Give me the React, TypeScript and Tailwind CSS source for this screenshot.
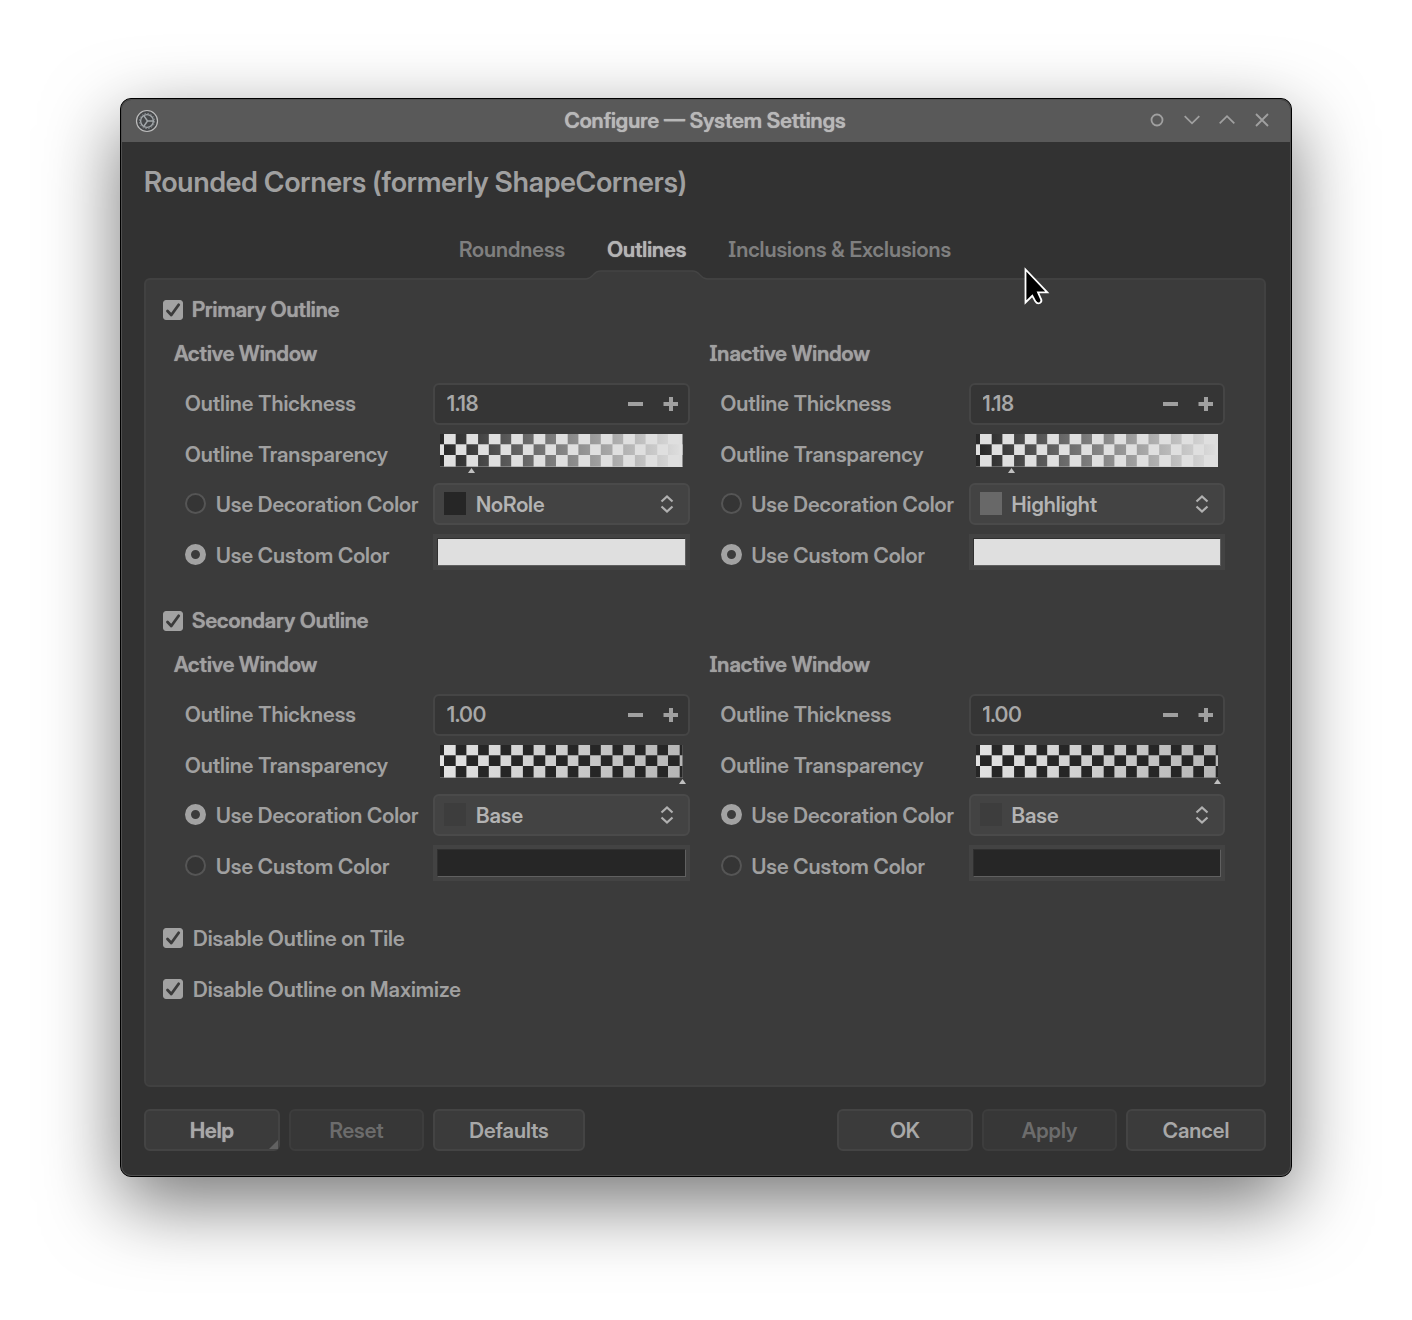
import { useId, useState, type ReactNode } from "react";

const LIGHT = "#dfdfdf";
const DARK = "#262626";

function SettingsIcon() {
  return (
    <svg width="24" height="24" viewBox="0 0 24 24" fill="none" aria-hidden="true">
      <circle cx="12" cy="12" r="10.5" fill="#46484a" stroke="#bdbdbd" strokeWidth="1.2" />
      <circle cx="12" cy="12" r="6.4" stroke="#a3a8ab" strokeWidth="1.4" />
      <circle cx="12" cy="12" r="7.6" stroke="#8b9093" strokeWidth="1" strokeDasharray="1.6 1.4" />
      <path d="M12.5 12H18M12.5 12L9 6.8M12.5 12L9 17" stroke="#a3a8ab" strokeWidth="1.4" />
    </svg>
  );
}

function WindowButton({ label, children }: { label: string; children: ReactNode }) {
  return (
    <button type="button" aria-label={label} className="flex h-8 w-[35px] items-center justify-center text-[#a0a0a0]">
      <svg width="18" height="18" viewBox="0 0 18 18" fill="none" stroke="currentColor" strokeWidth="1.8" aria-hidden="true">
        {children}
      </svg>
    </button>
  );
}

function TitleBar() {
  return (
    <header className="grid h-[42px] grid-cols-[1fr_auto_1fr] items-center rounded-t-[9px] bg-[#595959] pr-[11px] pl-[13px]">
      <SettingsIcon />
      <h1 className="pr-1 text-[21px] text-[#b8b8b8] [text-shadow:0_0_1px_currentColor]">Configure — System Settings</h1>
      <div className="flex justify-end pb-0.5">
        <WindowButton label="Keep above">
          <circle cx="9" cy="9" r="5.5" />
        </WindowButton>
        <WindowButton label="Minimize">
          <path d="M1.7 5.2L9 12.3L16.3 5.2" />
        </WindowButton>
        <WindowButton label="Maximize">
          <path d="M1.7 12.3L9 5.2L16.3 12.3" />
        </WindowButton>
        <WindowButton label="Close">
          <path d="M3 3L15 15M15 3L3 15" />
        </WindowButton>
      </div>
    </header>
  );
}

function Tabs() {
  return (
    <div role="tablist" className="flex h-14 justify-center leading-[54px] text-[#7f7f7f]">
      <button type="button" role="tab" aria-selected="false" className="px-[21px]">
        Roundness
      </button>
      <button type="button" role="tab" aria-selected="true" className="relative px-[21px] text-[#b4b4b4] [text-shadow:0_0_1px_currentColor]">
        Outlines
        <svg className="absolute inset-x-0 -bottom-0.5 h-[10px] w-full" viewBox="0 0 122 10" preserveAspectRatio="none" aria-hidden="true">
          <path d="M0 9C8 8.500 6 1 15 1H107C116 1 114 8.500 122 9V10H0Z" fill="#3b3b3b" />
          <path d="M0 9C8 8.500 6 1 15 1H107C116 1 114 8.500 122 9" fill="none" stroke="#444444" strokeWidth="1.300" />
        </svg>
      </button>
      <button type="button" role="tab" aria-selected="false" className="px-[21px]">
        Inclusions &amp; Exclusions
      </button>
    </div>
  );
}

function Check({ label, bold = false }: { label: string; bold?: boolean }) {
  return (
    <label className={bold ? "flex h-[30px] items-center gap-[9px] [text-shadow:0_0_1px_currentColor]" : "flex h-[30px] items-center gap-[10px]"}>
      <span className="relative block size-5">
        <input type="checkbox" defaultChecked className="peer block size-5 appearance-none rounded-[3px] border border-[#5a5a5a] bg-[#353535] checked:border-[#a2a2a2] checked:bg-[#a2a2a2]" />
        <svg className="pointer-events-none absolute inset-0 hidden size-5 peer-checked:block" viewBox="0 0 20 20" fill="none" aria-hidden="true">
          <path d="M4.500 11L8.300 15L15.700 4.800" stroke="#3b3b3b" strokeWidth="2.800" strokeLinecap="round" strokeLinejoin="round" />
        </svg>
      </span>
      <span className={bold ? "" : "pt-0.5"}>{label}</span>
    </label>
  );
}

function SpinBox({ id, initial }: { id: string; initial: string }) {
  const [value, setValue] = useState(initial);
  const step = (d: number) => setValue((v) => Math.max(0, (parseFloat(v) || 0) + d).toFixed(2));
  return (
    <div className="flex h-[42px] items-center rounded-md border-2 border-[#454545] bg-[#353535] text-[#a8a8a8]">
      <input id={id} type="text" value={value} onChange={(e) => setValue(e.target.value)} className="w-0 min-w-0 flex-1 bg-transparent pl-3 outline-none" />
      <button type="button" aria-label="Decrease" onClick={() => step(-0.25)} className="flex h-full w-[35px] items-center justify-center">
        <svg width="15" height="15" viewBox="0 0 15 15" fill="#a0a0a0" aria-hidden="true">
          <rect x="0" y="5" width="15" height="4" />
        </svg>
      </button>
      <button type="button" aria-label="Increase" onClick={() => step(0.25)} className="flex h-full w-[35px] items-center justify-center">
        <svg width="15" height="15" viewBox="0 0 15 15" fill="#a0a0a0" aria-hidden="true">
          <path d="M0.500 5H6V0H10V5H15V9H10V14H6V9H0.500Z" />
        </svg>
      </button>
    </div>
  );
}

function AlphaSlider({ id, light, initial }: { id: string; light: boolean; initial: number }) {
  const [value, setValue] = useState(initial);
  const key = useId();
  const from = light ? DARK : "#e2e2e2";
  const to = light ? LIGHT : "#b6b6b6";
  return (
    <div className="relative mr-[7px] ml-[7px] h-10">
      <svg className="h-[33px] w-full" aria-hidden="true">
        <defs>
          <linearGradient id={`${key}-g`}>
            <stop offset="0" stopColor={from} />
            <stop offset="1" stopColor={to} />
          </linearGradient>
          <pattern id={`${key}-p`} x="4" y="-1.400" width="22.400" height="22.400" patternUnits="userSpaceOnUse">
            <path d={light ? "M0 0H11.200V11.200H0ZM11.200 11.200H22.400V22.400H11.200Z" : "M11.200 0H22.400V11.200H11.200ZM0 11.200H11.200V22.400H0Z"} fill={light ? LIGHT : DARK} shapeRendering="crispEdges" />
          </pattern>
        </defs>
        <rect width="100%" height="33" fill={`url(#${key}-g)`} />
        <rect width="100%" height="33" fill={`url(#${key}-p)`} />
      </svg>
      <svg className="absolute bottom-px -ml-1 h-[5px] w-[7px]" style={{ left: `${value}%` }} viewBox="0 0 7 5" aria-hidden="true">
        <path d="M3.500 0L7 5H0Z" fill="#c0c0c0" />
      </svg>
      <input id={id} type="range" min="0" max="100" value={value} onChange={(e) => setValue(Number(e.target.value))} className="absolute inset-0 h-full w-full cursor-pointer opacity-0" />
    </div>
  );
}

function RoleSelect({ label, value, swatch }: { label: string; value: string; swatch: string }) {
  return (
    <div className="relative">
      <select aria-label={label} defaultValue={value} className="h-[42px] w-full appearance-none rounded-md border-2 border-[#4a4a4a] bg-[#434343] pt-0.5 pr-10 pl-[41px] text-[#b3b3b3]">
        <option>NoRole</option>
        <option>Highlight</option>
        <option>Base</option>
      </select>
      <span className="pointer-events-none absolute top-[9px] left-[11px] h-[23px] w-[22px]" style={{ backgroundColor: swatch }} />
      <svg className="pointer-events-none absolute top-3 right-4 h-[18px] w-[14px]" viewBox="0 0 14 18" fill="none" stroke="#b0b0b0" strokeWidth="2.200" aria-hidden="true">
        <path d="M1.500 6.500L7 1.500L12.500 6.500M1.500 11.500L7 16.500L12.500 11.500" />
      </svg>
    </div>
  );
}

function Radio({ name, label, checked }: { name: string; label: string; checked: boolean }) {
  return (
    <label className="flex items-center gap-[10px] pb-0.5">
      <input
        type="radio"
        name={name}
        defaultChecked={checked}
        className="size-[21px] appearance-none rounded-full border-2 border-[#555555] bg-[#353535] checked:border-[6px] checked:border-[#a2a2a2] checked:bg-[#3b3b3b]"
      />
      <span className="pt-1">{label}</span>
    </label>
  );
}

type OutlineProps = {
  title: string;
  thickness: string;
  alpha: number;
  role: string;
  swatch: string;
  custom: boolean;
};

function OutlineColumn({ title, thickness, alpha, role, swatch, custom }: OutlineProps) {
  const id = useId();
  return (
    <fieldset className="min-w-0">
      <legend className="h-[45px] leading-8 [text-shadow:0_0_1px_currentColor]">{title}</legend>
      <div className="grid grid-cols-[248px_1fr] items-center gap-y-[9px] pl-[11px]">
        <label htmlFor={`${id}-t`}>Outline Thickness</label>
        <SpinBox id={`${id}-t`} initial={thickness} />
        <label htmlFor={`${id}-a`} className="pt-0.5">
          Outline Transparency
        </label>
        <AlphaSlider id={`${id}-a`} light={custom} initial={alpha} />
        <Radio name={id} label="Use Decoration Color" checked={!custom} />
        <RoleSelect label="Decoration color" value={role} swatch={swatch} />
        <Radio name={id} label="Use Custom Color" checked={custom} />
        <div className="h-[42px]">
          <button type="button" aria-label="Custom color" className="block h-9 w-full bg-[#434343] p-1">
            <span className="block h-7 border border-t-[#303030] border-r-[#606060] border-b-[#606060] border-l-[#303030]" style={{ backgroundColor: custom ? LIGHT : DARK }} />
          </button>
        </div>
      </div>
    </fieldset>
  );
}

function OutlineSection({ title, columns }: { title: string; columns: OutlineProps[] }) {
  return (
    <section>
      <Check label={title} bold />
      <div className="mt-[13px] mr-[22px] ml-[11px] grid grid-cols-2 gap-5">
        {columns.map((c) => (
          <OutlineColumn key={c.title} {...c} />
        ))}
      </div>
    </section>
  );
}

function FooterButton({ children, disabled = false, width, menu = false }: { children: ReactNode; disabled?: boolean; width: string; menu?: boolean }) {
  return (
    <button
      type="button"
      disabled={disabled}
      className={`relative h-[42px] rounded-md border-2 border-[#444444] bg-[#3b3b3b] pt-0.5 text-[#a8a8a8] disabled:border-[#3d3d3d] disabled:bg-[#373737] disabled:text-[#6c6c6c] ${width} ${menu ? "[text-shadow:0_0_1px_currentColor]" : ""}`}
    >
      {children}
      {menu && (
        <svg className="absolute right-0 bottom-0 size-[9px]" viewBox="0 0 9 9" aria-hidden="true">
          <path d="M9 0V9H0Z" fill="#616161" />
        </svg>
      )}
    </button>
  );
}

function Cursor() {
  return (
    <svg className="pointer-events-none absolute top-[168px] left-[902px] h-10 w-7" viewBox="0 0 28 40" aria-hidden="true">
      <path d="M2.500 2.500V35.500L9.300 28.800L12.500 34.600Q14.200 37.200 16.800 36Q19.300 34.600 18 32L15 25.300H24.300Z" fill="#000000" stroke="#ffffff" strokeWidth="1.800" />
    </svg>
  );
}

export default function App() {
  return (
    <div className="min-h-screen bg-white px-[120px] pt-[98px] pb-36 font-['Inter_Display','Inter',sans-serif] text-[21px] leading-[30px] font-semibold text-[#a0a0a0] [font-feature-settings:'cv08'] [font-variation-settings:'opsz'_32]">
      <main className="relative rounded-[11px] border border-black bg-[#323232] shadow-[0_26px_76px_rgba(0,0,0,0.54)]">
        <div className="rounded-[10px] border border-[#505050]">
          <TitleBar />
          <div className="pr-6 pb-6 pl-[22px]">
            <h2 className="pt-5 text-[28px] leading-10">Rounded Corners (formerly ShapeCorners)</h2>
            <div className="pt-5">
              <Tabs />
            </div>
            <div role="tabpanel" className="rounded-md border-2 border-[#414141] bg-[#3b3b3b] px-[17px] pt-[15px] pb-[81px]">
              <div className="flex flex-col gap-[30px]">
                <OutlineSection
                  title="Primary Outline"
                  columns={[
                    { title: "Active Window", thickness: "1.18", alpha: 13, role: "NoRole", swatch: "#262626", custom: true },
                    { title: "Inactive Window", thickness: "1.18", alpha: 15, role: "Highlight", swatch: "#686868", custom: true },
                  ]}
                />
                <OutlineSection
                  title="Secondary Outline"
                  columns={[
                    { title: "Active Window", thickness: "1.00", alpha: 100, role: "Base", swatch: "#3d3d3d", custom: false },
                    { title: "Inactive Window", thickness: "1.00", alpha: 100, role: "Base", swatch: "#3d3d3d", custom: false },
                  ]}
                />
              </div>
              <div className="flex flex-col gap-[21px] pt-9">
                <Check label="Disable Outline on Tile" />
                <Check label="Disable Outline on Maximize" />
              </div>
            </div>
            <footer className="flex gap-[9px] pt-[22px]">
              <FooterButton width="w-[136px]" menu>
                Help
              </FooterButton>
              <FooterButton width="w-[135px]" disabled>
                Reset
              </FooterButton>
              <FooterButton width="w-[152px]">Defaults</FooterButton>
              <div className="flex-1" />
              <FooterButton width="w-[136px]">OK</FooterButton>
              <FooterButton width="w-[135px]" disabled>
                Apply
              </FooterButton>
              <FooterButton width="w-[140px]">Cancel</FooterButton>
            </footer>
          </div>
        </div>
        <Cursor />
      </main>
    </div>
  );
}
